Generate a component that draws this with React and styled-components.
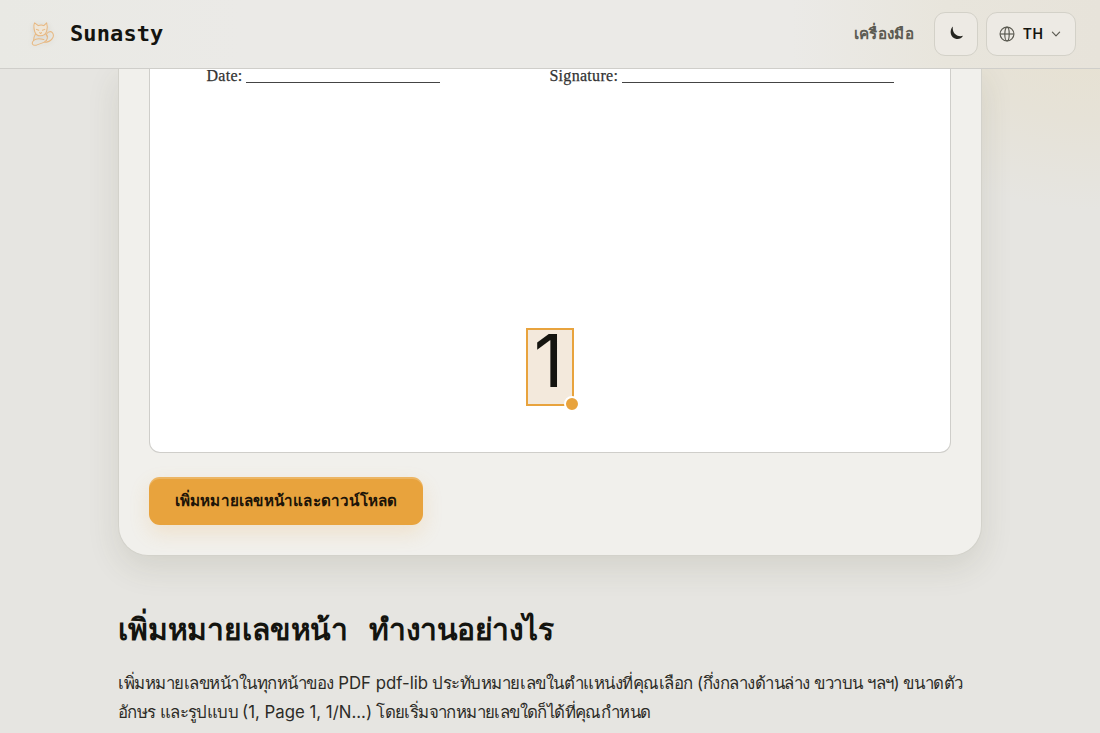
import React from "react";
import styled, { createGlobalStyle } from "styled-components";

const GlobalStyle = createGlobalStyle`
  * {
    box-sizing: border-box;
  }
  body {
    margin: 0;
    height: 733px;
    overflow: hidden;
    color: #14140f;
    background-color: #e6e5e1;
    font-family: Inter, sans-serif;
  }
`;

function CatLogo() {
  return (
    <svg width="28" height="30" viewBox="0 0 28 30" fill="none" stroke="#e8b070" strokeWidth="1.1" strokeLinecap="round" strokeLinejoin="round">
      <path d="M6 12C5 8 5 5 6 3L10 6C12 5 14 5 16 6L19 3C20 6 20 9 19 12C18 16 15 17 12 17C9 17 7 15 6 12Z" fill="#f0e6d6" />
      <path d="M8 10L10.5 11M17 10L14.5 11M11.5 13.5L12.5 14.5L13.5 13.5" />
      <path d="M7 15C5 18 5 20 5 22C2 25 4 28 8 27L16 24C19 24 23 23 25 20C28 16 25 11 21 13C19 14 18 16 20 18" />
      <path d="M5 22C8 19 12 20 16 21M18 15C21 17 20 22 17 23" />
    </svg>
  );
}

function App() {
  return (
    <Page>
      <GlobalStyle />
      <Header>
        <Brand>
          <LogoBox>
            <CatLogo />
          </LogoBox>
          <BrandName>Sunasty</BrandName>
        </Brand>
        <Nav>
          <NavLink>เครื่องมือ</NavLink>
          <HeaderButton $width={44}>
            <svg width="16" height="16" viewBox="0 0 16 16">
              <path d="M4.9 1.2C.8 5.1 2.5 12.8 8.4 13.7C11.2 14.1 13.6 13 15 10.5C9.5 12.5 3.6 7.6 4.9 1.2Z" transform="translate(1 -.8)" fill="#24241f" />
            </svg>
          </HeaderButton>
          <HeaderButton $width={90}>
            <svg width="16" height="16" viewBox="0 0 16 16" fill="none" stroke="#5c5b52" strokeWidth="1.2">
              <circle cx="8" cy="8" r="6.9" />
              <ellipse cx="8" cy="8" rx="2.2" ry="6.9" />
              <path d="M1.2 8H14.8" />
            </svg>
            <span>TH</span>
            <svg width="10" height="10" viewBox="0 0 10 10" fill="none" stroke="#5c5b52" strokeWidth="1.2" strokeLinecap="round" strokeLinejoin="round">
              <path d="M1.4 3.2L5 6.8L8.6 3.2" />
            </svg>
          </HeaderButton>
        </Nav>
      </Header>
      <Card>
        <Preview>
          <FormLine>
            <Field $width={40}>Date:</Field>
            <Rule $width={194} />
            <Field $gap={109} $width={73}>Signature:</Field>
            <Rule $width={272} />
          </FormLine>
          <PageNumber>
            1
            <Handle />
          </PageNumber>
        </Preview>
        <DownloadButton>
          <span>เพิ่มหมายเลขหน้าและดาวน์โหลด</span>
        </DownloadButton>
      </Card>
      <Info>
        <Title>
          <TitlePart $spacing={-0.15}>เพิ่มหมายเลขหน้า</TitlePart>
          <TitlePart $spacing={-0.45}>ทำงานอย่างไร</TitlePart>
        </Title>
        <Text $spacing={-0.48}>
          เพิ่มหมายเลขหน้าในทุกหน้าของ <Latin>PDF pdf-lib</Latin> ประทับหมายเลขในตำแหน่งที่คุณเลือก (กึ่งกลางด้านล่าง ขวาบน ฯลฯ) ขนาดตัว
        </Text>
        <Text $spacing={-0.6}>
          อักษร และรูปแบบ <Latin>(1, Page 1, 1/N...)</Latin> โดยเริ่มจากหมายเลขใดก็ได้ที่คุณกำหนด
        </Text>
      </Info>
    </Page>
  );
}

const Page = styled.div`
  height: 733px;
  overflow: hidden;
  background: radial-gradient(ellipse 280px 200px at 1100px 10px, #e7e1d0 0%, #e6e2d7 55%, rgba(230, 229, 225, 0) 100%);
`;

const Header = styled.header`
  position: relative;
  z-index: 1;
  display: flex;
  align-items: center;
  justify-content: space-between;
  height: 69px;
  padding: 0 24px 1px 26px;
  border-bottom: 1px solid #cfceca;
  background: linear-gradient(90deg, #e9e9e4 0%, #ebeae7 22%, #ebeae7 72%, #e8e5dc 86%, #e7e3da 100%);
`;

const Brand = styled.div`
  display: flex;
  align-items: center;
  gap: 12px;
`;

const LogoBox = styled.div`
  display: grid;
  place-items: center;
  width: 32px;
  height: 32px;
  opacity: 0.85;
  filter: drop-shadow(0 1px 3px rgba(80, 70, 50, 0.15));
  svg {
    width: 26px;
    height: 28px;
  }
`;

const BrandName = styled.span`
  font-family: "DejaVu Sans Mono", monospace;
  font-size: 22px;
  font-weight: 700;
  line-height: 28px;
  letter-spacing: 0.1px;
`;

const Nav = styled.nav`
  display: flex;
  align-items: center;
  gap: 8px;
`;

const NavLink = styled.span`
  margin-right: 12px;
  color: #5c5b52;
  font-size: 15.2px;
  font-weight: 600;
  letter-spacing: 0.3px;
`;

const HeaderButton = styled.button`
  display: flex;
  align-items: center;
  justify-content: center;
  gap: 8px;
  width: ${(props) => props.$width}px;
  height: 44px;
  padding: 0 2px 0 0;
  border: 1px solid #d3d1c8;
  border-radius: 11px;
  background: #edeae4;
  color: #14140f;
  font: 600 14px Inter, sans-serif;
  letter-spacing: 0.4px;
`;

const Card = styled.main`
  width: 864px;
  height: 488px;
  margin: -1px 0 0 118px;
  padding: 0 30px;
  border: 1px solid #d3d2cb;
  border-top: 0;
  border-radius: 0 0 30px 30px;
  background: #f1f0ec;
  box-shadow: 0 12px 32px rgba(70, 70, 45, 0.12);
`;

const Preview = styled.div`
  width: 802px;
  height: 385px;
  border: 1px solid #cfceca;
  border-top: 0;
  border-radius: 0 0 11px 11px;
  background: #fff;
`;

const FormLine = styled.div`
  display: flex;
  height: 16px;
  padding-left: 56.4px;
  color: #333;
`;

const Field = styled.span`
  width: ${(props) => props.$width}px;
  margin-left: ${(props) => props.$gap || 0}px;
  font: 16px/16px "Liberation Serif", serif;
  letter-spacing: 0.3px;
  -webkit-text-stroke: 0.25px #333;
`;

const Rule = styled.span`
  width: ${(props) => props.$width}px;
  height: 15px;
  border-bottom: 1px solid #444;
`;

const PageNumber = styled.div`
  position: relative;
  width: 48px;
  height: 78px;
  margin: 244px 0 0 376px;
  padding-right: 3px;
  border: 2px solid #e8a33d;
  background: #f3e9dc;
  font: 73px/62px Inter, sans-serif;
  text-align: center;
`;

const Handle = styled.i`
  position: absolute;
  right: -8px;
  bottom: -8px;
  width: 16px;
  height: 16px;
  border: 2px solid #fff;
  border-radius: 50%;
  background: #e8a33d;
`;

const DownloadButton = styled.button`
  display: flex;
  align-items: center;
  justify-content: center;
  width: 274px;
  height: 48px;
  margin-top: 24px;
  padding: 0;
  border: 0;
  border-radius: 11px;
  background: #e8a33d;
  box-shadow: inset 0 2px 0 rgba(255, 255, 255, 0.2), 0 8px 20px rgba(232, 163, 61, 0.18);
  color: #1c1408;
  font-family: inherit;
  font-size: 15.2px;
  font-weight: 700;
  letter-spacing: 0.2px;
  white-space: nowrap;
`;

const Info = styled.section`
  padding: 51px 0 0 118px;
  white-space: nowrap;
`;

const Title = styled.h2`
  display: flex;
  gap: 21px;
  margin: 0 0 18px;
  font-size: 30px;
  font-weight: 700;
  line-height: 44px;
`;

const TitlePart = styled.span`
  letter-spacing: ${(props) => props.$spacing}px;
`;

const Text = styled.p`
  margin: 0;
  color: #2d2c27;
  font-size: 16.8px;
  line-height: 29px;
  letter-spacing: ${(props) => props.$spacing}px;
`;

const Latin = styled.span`
  letter-spacing: 0;
`;

export default App;
